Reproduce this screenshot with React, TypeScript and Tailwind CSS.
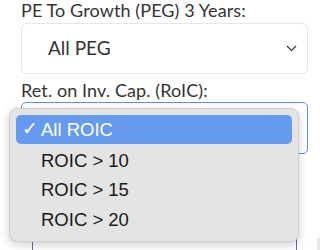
import React from 'react';

const options = ['All ROIC', 'ROIC > 10', 'ROIC > 15', 'ROIC > 20'];

const Chevron = () => (
  <svg width="11" height="7" viewBox="0 0 11 7" fill="none" stroke="#333" strokeWidth="1.1">
    <path d="M1 1 L5.5 5.5 L10 1" />
  </svg>
);

export default function App() {
  return (
    <div className="relative w-[320px] h-[250px] overflow-hidden bg-white font-['Lato',sans-serif] text-[#333]">
      <div className="pl-[21px] pr-[12px]">
        <div className="text-[18px] leading-[20px] tracking-[0.1px]">PE To Growth (PEG) 3 Years:</div>
        <div className="mt-[3px] h-[51px] flex items-center justify-between rounded-[5px] border border-[#e6e6e6] bg-white pl-[26px] pr-[10px]">
          <span className="text-[19px]">All PEG</span>
          <Chevron />
        </div>
        <div className="mt-[5px] text-[18px] leading-[22px] tracking-[0.1px]">Ret. on Inv. Cap. (RoIC):</div>
        <div className="mt-[1px] h-[52px] flex items-center justify-end rounded-[5px] border border-[#5b8ff0] bg-white pr-[12px]">
          <svg width="8" height="8" viewBox="0 0 8 8" stroke="#222" strokeWidth="1.3">
            <path d="M1 7 L7 1" />
          </svg>
        </div>
      </div>

      {/* next field, mostly hidden behind the open menu */}
      <div className="absolute left-[32px] top-[200px] w-[265px] h-[80px] border-x border-[#6a62d8]" />
      <div className="absolute right-0 top-[238px] w-[3px] h-[20px] bg-[#e8e8e8]" />

      {/* native select menu */}
      <div className="absolute left-[9px] top-[108px] w-[290px] h-[134px] rounded-[8px] border border-[#cfcfcf] bg-[#e4e4e4] px-[6px] pt-[6px] shadow-[0_3px_10px_rgba(0,0,0,0.18)] font-['Liberation_Sans',sans-serif]">
        {options.map((o, i) => (
          <div
            key={o}
            className={
              i === 0
                ? 'h-[29px] mb-[2px] flex items-center rounded-[5px] bg-[#6699f0] text-white text-[18.5px]'
                : 'h-[29.5px] flex items-center text-[#1a1a1a] text-[18.5px]'
            }
          >
            <span className="w-[25px] pl-[6px] text-[19px]">{i === 0 ? '✓' : ''}</span>
            <span>{o}</span>
          </div>
        ))}
      </div>
    </div>
  );
}
